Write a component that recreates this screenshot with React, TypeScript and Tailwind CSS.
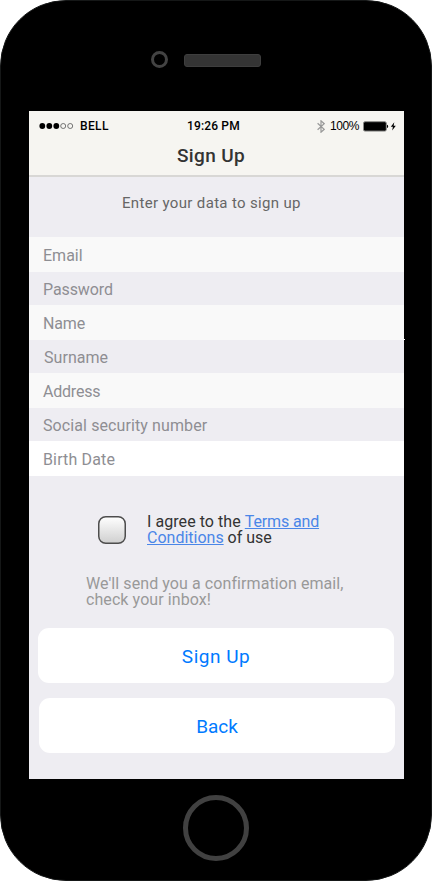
import React from "react";

const fields = [
  { label: "Email", row: "h-[35px] bg-[#f9f9f9] pl-[14px]" },
  { label: "Password", row: "h-[33px] pl-[14px] tracking-[-0.1px]" },
  { label: "Name", row: "h-[35px] bg-[#f9f9f9] pl-[14px] tracking-[-0.15px]" },
  { label: "Surname", row: "h-[33px] pl-[15px] tracking-[0.05px]" },
  { label: "Address", row: "h-[35px] bg-[#f9f9f9] pl-[14px] tracking-[-0.22px]" },
  { label: "Social security number", row: "h-[33px] pl-[14px] tracking-[0.1px]" },
  { label: "Birth Date", row: "h-[35px] bg-white pl-[14px] tracking-[0.15px]" },
];

function SignalDots() {
  return (
    <svg width="35" height="8" viewBox="0 0 35 8" className="-mt-px shrink-0">
      {[3.3, 10.3, 17.3].map((x) => (
        <circle key={x} cx={x} cy="4" r="2.9" fill="#000" />
      ))}
      {[24.2, 31.2].map((x) => (
        <circle key={x} cx={x} cy="4" r="2.5" fill="none" stroke="#555" strokeWidth="0.8" />
      ))}
    </svg>
  );
}

function Bluetooth() {
  return (
    <svg width="8" height="13" viewBox="0 0 8 13" fill="none" stroke="#999" strokeWidth="1.2">
      <path d="M0.6 3.2 L7.2 9.3 L4 12.2 V0.8 L7.2 3.7 L0.6 9.8" />
    </svg>
  );
}

function Battery() {
  return (
    <svg width="34" height="11" viewBox="0 0 34 11">
      <rect x="0.5" y="0.7" width="22.8" height="9.4" rx="1.5" fill="#000" stroke="#8a8a88" strokeWidth="1" />
      <path d="M24 3.7 C25.6 4 25.6 6.8 24 7.1 Z" fill="#000" />
      <path d="M31.3 1.3 L27.8 5.8 H29.9 L29.2 9.4 L32.8 4.8 H30.6 Z" fill="#000" />
    </svg>
  );
}

function Checkbox() {
  return (
    <svg width="28" height="28" viewBox="0 0 28 28" className="mt-[2px] shrink-0">
      <defs>
        <linearGradient id="checkboxFill" x1="0" y1="0" x2="0" y2="1">
          <stop offset="0" stopColor="#ffffff" />
          <stop offset="1" stopColor="#cfcfcf" />
        </linearGradient>
      </defs>
      <rect x="0.75" y="0.75" width="26.5" height="26.5" rx="7" fill="url(#checkboxFill)" stroke="#4d4d4d" strokeWidth="1.5" />
    </svg>
  );
}

export default function App() {
  return (
    <div className="h-[882px] w-[432px] bg-white font-['Roboto',sans-serif]">
      <div className="flex h-[881px] w-[432px] flex-col rounded-[66px] border border-[#151717] bg-black">
        <div className="flex h-[110px] shrink-0 items-start pl-[150px] pt-[50px]">
          <div className="h-[17px] w-[17px] rounded-full border-[3px] border-[#434343]" />
          <div className="ml-[16px] mt-[3px] h-[13px] w-[77px] rounded-[3px] border border-[#3e3e3e] bg-[#343434]" />
        </div>

        <main className="relative ml-[28px] flex h-[668px] w-[375px] shrink-0 flex-col bg-[#eeedf2]">
          <header className="h-[66px] shrink-0 border-b-2 border-[#d8d7d5] bg-[#f6f5f1]">
            <div className="flex h-[30px] items-center pl-[10px] text-[12px] leading-[14px] text-black">
              <SignalDots />
              <span className="ml-[6px] w-[107px] font-medium tracking-[0.35px]">BELL</span>
              <span className="w-[130px] font-medium tracking-[0.15px]">19:26 PM</span>
              <Bluetooth />
              <span className="ml-[5px] w-[33px] whitespace-nowrap font-['Liberation_Sans',sans-serif] text-[12px] tracking-[-0.45px]">
                100%
              </span>
              <Battery />
            </div>
            <h1 className="pl-[148px] text-[19px] font-medium leading-[29px] tracking-[0.35px] text-[#333]">Sign Up</h1>
          </header>

          <p className="h-[60px] shrink-0 pl-[93px] pt-[16px] text-[15px] leading-[20px] tracking-[0.34px] text-[#666]">
            Enter your data to sign up
          </p>

          <div className="shrink-0">
            {fields.map((field) => (
              <div key={field.label} className={`flex items-center text-[16px] leading-[20px] text-[#8e8e93] ${field.row}`}>
                <span className="mt-[2px]">{field.label}</span>
              </div>
            ))}
          </div>
          <span className="absolute left-[375px] top-[228px] h-px w-px bg-white" />

          <div className="mt-[38px] flex shrink-0 items-start pl-[69px]">
            <Checkbox />
            <p className="ml-[21px] whitespace-nowrap text-[16px] leading-[16px] text-[#333]">
              <span className="tracking-[0.06px]">I agree to the </span>
              <span className="tracking-[-0.14px] text-[#4a86e8] underline">Terms and</span>
              <br />
              <span className="text-[#4a86e8] underline">Conditions</span> of use
            </p>
          </div>

          <p className="mt-[30px] shrink-0 whitespace-nowrap pl-[57px] text-[16px] leading-[16px] tracking-[0.08px] text-[#999]">
            We'll send you a confirmation email,
            <br />
            check your inbox!
          </p>

          <button className="ml-[9px] mt-[20px] h-[55px] w-[356px] shrink-0 rounded-[11px] bg-white pt-[2px] text-[19px] leading-[24px] tracking-[0.5px] text-[#007aff]">
            Sign Up
          </button>
          <button className="ml-[10px] mt-[15px] h-[55px] w-[356px] shrink-0 rounded-[11px] bg-white pt-[2px] text-[19px] leading-[24px] text-[#007aff]">
            Back
          </button>
        </main>

        <div className="ml-[182px] mt-[16px] h-[66px] w-[66px] shrink-0 rounded-full border-[5px] border-[#414141]" />
      </div>
    </div>
  );
}
